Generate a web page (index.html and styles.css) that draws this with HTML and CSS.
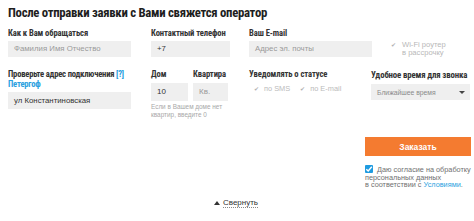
FILE: index.html
```html
<!DOCTYPE html>
<html lang="ru">
<head>
<meta charset="utf-8">
<link rel="stylesheet" href="styles.css">
</head>
<body>
<div class="page">
  <h1 class="title">После отправки заявки с Вами свяжется оператор</h1>
  <div class="row row1">
    <div class="col c1">
      <div class="label">Как к Вам обращаться</div>
      <div class="input w123 ph">Фамилия Имя Отчество</div>
    </div>
    <div class="col c2">
      <div class="label">Контактный телефон</div>
      <div class="input w79">+7</div>
    </div>
    <div class="col c3">
      <div class="label">Ваш E-mail</div>
      <div class="input w123 ph">Адрес эл. почты</div>
    </div>
    <div class="col c4">
      <div class="wifi">
        <span class="chk">&#10004;</span>
        <span class="wifi-text">Wi-Fi роутер<br>в рассрочку</span>
      </div>
    </div>
  </div>
  <div class="row row2">
    <div class="col c1">
      <div class="label two">Проверьте адрес подключения <span class="link">[?]</span><br><span class="link">Петергоф</span></div>
      <div class="input w123 addr">ул Константиновская</div>
    </div>
    <div class="col c2">
      <div class="pair">
        <div class="sub">
          <div class="label">Дом</div>
          <div class="input small">10</div>
        </div>
        <div class="sub">
          <div class="label">Квартира</div>
          <div class="input small2 ph">Кв.</div>
        </div>
      </div>
      <div class="hint">Если в Вашем доме нет<br>квартир, введите 0</div>
    </div>
    <div class="col c3">
      <div class="label">Уведомлять о статусе</div>
      <div class="notify">
        <span class="opt"><span class="chk">&#10004;</span>по SMS</span>
        <span class="opt"><span class="chk">&#10004;</span>по E-mail</span>
      </div>
    </div>
    <div class="col c4">
      <div class="label lbl4">Удобное время для звонка</div>
      <div class="select"><span>Ближайшее время</span><span class="caret"></span></div>
    </div>
  </div>
  <div class="bottom">
    <div class="order">
      <button class="btn">Заказать</button>
      <div class="consent">
        <span class="bluechk"><svg width="8" height="8" viewBox="0 0 8 8"><path d="M1.3 4.2 L3.2 6 L6.8 1.8" fill="none" stroke="#fff" stroke-width="1.4"/></svg></span>
        Даю согласие на обработку<br>персональных данных<br>в соответствии с <span class="link">Условиями</span>.
      </div>
    </div>
  </div>
  <div class="collapse"><span class="tri"></span><span class="collapse-text">Свернуть</span></div>
</div>
</body>
</html>
```
FILE: styles.css
```css
html, body {
  margin: 0;
  padding: 0;
  background: #fff;
}
body {
  font-family: "Roboto", "Open Sans", sans-serif;
  font-stretch: 75%;
  color: #333;
  width: 474px;
  height: 221px;
  overflow: hidden;
}
.page {
  padding: 4px 0 0 8px;
}
.title {
  margin: 0;
  font-size: 12.8px;
  line-height: 18px;
  font-weight: 700;
  color: #1e1e1e;
  letter-spacing: -0.3px;
}
.row {
  display: grid;
  grid-template-columns: 143px 98px 122px 100px;
}
.row1 {
  margin-top: 6px;
}
.row2 {
  margin-top: 12px;
}
.col {
  display: flex;
  flex-direction: column;
}
.label {
  font-size: 8.6px;
  line-height: 10px;
  font-weight: 700;
  color: #333;
  white-space: nowrap;
  letter-spacing: -0.1px;
}
.row2 .c1 .label {
  letter-spacing: -0.2px;
}
.row1 .label {
  margin-bottom: 3px;
}
.input {
  background: #efefef;
  height: 16px;
  box-sizing: border-box;
  padding-left: 6px;
  font-family: "Liberation Sans", Arial, sans-serif;
  font-size: 7.8px;
  line-height: 16px;
  color: #333;
}
.ph {
  color: #9a9a9a;
}
.w123 { width: 123px; }
.w79 { width: 79px; }
.addr {
  margin-top: 3px;
  height: 17px;
  line-height: 17px;
}
.link {
  color: #2a9fe0;
}
.wifi {
  display: flex;
  align-items: flex-start;
  padding: 13px 0 0 20px;
  color: #b8b8b8;
  font-family: "Liberation Sans", Arial, sans-serif;
  font-size: 7.6px;
  line-height: 8px;
}
.chk {
  font-size: 5.5px;
  color: #b0b0b0;
  margin-right: 5px;
  line-height: 8px;
}
.wifi .chk {
  margin-right: 6px;
}
.pair {
  display: flex;
  gap: 5px;
}
.sub {
  display: flex;
  flex-direction: column;
}
.sub .label {
  margin-bottom: 4px;
}
.small {
  width: 37px;
  height: 18px;
  line-height: 18px;
  font-size: 8px;
}
.small2 {
  width: 35px;
  height: 18px;
  line-height: 18px;
  font-size: 8px;
}
.hint {
  margin-top: 2px;
  font-family: "Liberation Sans", Arial, sans-serif;
  font-size: 6.4px;
  line-height: 8px;
  color: #a8a8a8;
  white-space: nowrap;
}
.notify {
  display: flex;
  gap: 10px;
  padding: 5px 0 0 5px;
  color: #bbb;
  font-family: "Liberation Sans", Arial, sans-serif;
  font-size: 7.4px;
  line-height: 9px;
}
.notify .chk {
  margin-right: 5px;
}
.lbl4 {
  margin-top: 1px;
  margin-bottom: 4px;
  font-size: 8.8px;
  letter-spacing: -0.15px;
}
.select {
  width: 99px;
  height: 16px;
  box-sizing: border-box;
  background: #efefef;
  display: flex;
  align-items: center;
  justify-content: space-between;
  padding: 0 5px 0 6px;
  font-family: "Liberation Sans", Arial, sans-serif;
  font-size: 6.8px;
  color: #8a8a8a;
}
.caret {
  width: 0;
  height: 0;
  border-left: 3px solid transparent;
  border-right: 3px solid transparent;
  border-top: 3.5px solid #444;
}
.bottom {
  display: flex;
  justify-content: flex-end;
  padding-right: 3px;
  margin-top: 18px;
}
.order {
  width: 106px;
}
.btn {
  display: block;
  width: 106px;
  height: 19px;
  border: 0;
  padding: 0;
  background: #f47b30;
  color: #fff;
  font-family: "Liberation Sans", Arial, sans-serif;
  font-size: 8.5px;
  font-weight: 700;
}
.consent {
  margin-top: 9px;
  font-family: "Liberation Sans", Arial, sans-serif;
  font-size: 7.3px;
  line-height: 7.5px;
  color: #707070;
  white-space: nowrap;
}
.bluechk {
  display: inline-flex;
  align-items: center;
  justify-content: center;
  width: 8px;
  height: 8px;
  background: #1f9be0;
  border-radius: 1px;
  vertical-align: -1px;
  margin-right: 2px;
}
.collapse {
  display: flex;
  justify-content: center;
  align-items: center;
  gap: 3px;
  margin-top: 9px;
  padding-right: 10px;
  font-family: "Liberation Sans", Arial, sans-serif;
  font-size: 8px;
  color: #333;
}
.tri {
  width: 0;
  height: 0;
  border-left: 3.5px solid transparent;
  border-right: 3.5px solid transparent;
  border-bottom: 4px solid #333;
}
.collapse-text {
  border-bottom: 1px dotted #888;
  line-height: 9px;
}
```
